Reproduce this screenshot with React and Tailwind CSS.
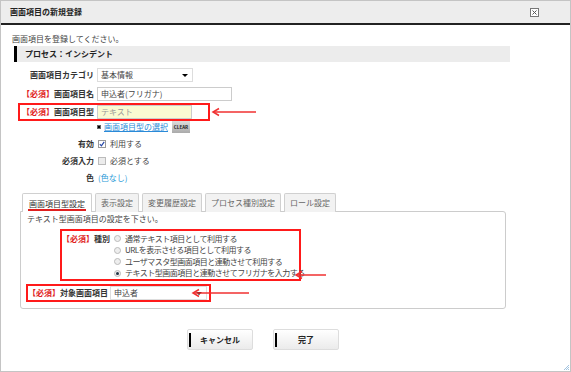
import React from 'react';

const Req = () => <span className="text-[#e02020]">【必須】</span>;

const Arrow = ({ x1, x2, y }) => (
  <svg
    className="absolute pointer-events-none"
    style={{ left: x2 - 2, top: y - 6, width: x1 - x2 + 4, height: 12 }}
    viewBox={`0 0 ${x1 - x2 + 4} 12`}
  >
    <line x1={x1 - x2 + 2} y1="6" x2="3" y2="6" stroke="#f03030" strokeWidth="1.5" />
    <polyline points="9,2.5 3,6 9,9.5" fill="none" stroke="#f03030" strokeWidth="1.5" />
  </svg>
);

const Select = ({ value, w }) => (
  <div className={`${w} shrink-0 h-[14px] border border-[#ddd] bg-white flex items-center justify-between pl-[3px] pr-[4px]`}>
    <span>{value}</span>
    <span className="w-0 h-0 border-l-[3px] border-r-[3px] border-t-[3px] border-l-transparent border-r-transparent border-t-black" />
  </div>
);

const Radio = ({ on }) => (
  <span className="shrink-0 w-[7px] h-[7px] rounded-full border border-[#bbb] bg-[#eee] flex items-center justify-center">
    {on && <span className="w-[3px] h-[3px] rounded-full bg-[#234]" />}
  </span>
);

const Tab = ({ label, active }) => (
  <div
    className={`h-[19px] px-[5px] flex items-center border border-b-0 border-[#d0d0d0] rounded-t-[2px] ${
      active ? 'bg-white text-[#333] z-10' : 'bg-[#f2f2f2] text-[#666]'
    }`}
  >
    <span className={active ? 'border-b-2 border-[#e02020] leading-[11px] mt-[3px] px-[1px]' : ''}>{label}</span>
  </div>
);

const Btn = ({ label }) => (
  <button className="w-[66px] h-[21px] border border-[#ddd] rounded-[2px] bg-gradient-to-b from-white to-[#ebebeb] flex items-center">
    <span className="w-[2px] h-[14px] bg-black ml-[1px]" />
    <span className="flex-1 text-center font-bold text-[#222] pr-[3px]">{label}</span>
  </button>
);

export default function App() {
  const rows = [
    ['通常テキスト項目として利用する', false],
    ['URLを表示させる項目として利用する', false],
    ['ユーザマスタ型画面項目と連動させて利用する', false],
    ['テキスト型画面項目と連動させてフリガナを入力する', true],
  ];
  return (
    <div className="relative w-[571px] h-[372px] bg-white border border-[#c4c4c4] overflow-hidden font-['Noto_Sans_CJK_JP','Liberation_Sans',sans-serif] text-[8px] text-[#444]">
      <div className="h-[24px] bg-[#ededed] border-b-2 border-[#222] flex items-center justify-between pl-[9px] pr-[31px]">
        <span className="font-bold text-[#222]">画面項目の新規登録</span>
        <svg width="9" height="9" viewBox="0 0 9 9">
          <rect x="0.5" y="0.5" width="8" height="8" fill="white" stroke="#777" />
          <path d="M2.5 2.5 L6.5 6.5 M6.5 2.5 L2.5 6.5" stroke="#555" strokeWidth="1" />
        </svg>
      </div>

      <div className="px-[11px]">
        <div className="mt-[8px] leading-[12px]">画面項目を登録してください。</div>
        <div className="mt-[1px] ml-[2px] w-[496px] h-[16px] bg-[#ececec] border-l-[3px] border-black flex items-center pl-[8px] font-bold text-[#222]">
          プロセス：インシデント
        </div>

        <div className="mt-[6px] flex items-center h-[14px] gap-[3px]">
          <div className="w-[82px] text-right font-bold text-[#333]">画面項目カテゴリ</div>
          <Select value="基本情報" w="w-[96px]" />
        </div>
        <div className="mt-[5px] flex items-center h-[14px] gap-[3px]">
          <div className="w-[82px] text-right font-bold text-[#333] whitespace-nowrap"><Req />画面項目名</div>
          <div className="w-[135px] h-[14px] border border-[#ccc] bg-white flex items-center pl-[3px]">申込者(フリガナ)</div>
        </div>
        <div className="mt-[2px] ml-[6px] w-[192px] h-[18px] border-2 border-[#ff1a1a] flex items-center gap-[3px]">
          <div className="w-[74px] text-right font-bold text-[#333] whitespace-nowrap"><Req />画面項目型</div>
          <div className="w-[95px] h-[14px] border border-[#ccc] bg-[#fafad2] flex items-center pl-[3px] text-[#999]">テキスト</div>
        </div>
        <div className="h-[12px] flex items-center pl-[85px] gap-[2px]">
          <span className="w-[4px] h-[4px] bg-black border border-[#666]" />
          <span className="text-[#2a8ad8] underline ml-[1px]">画面項目型の選択</span>
          <span className="ml-[2px] h-[12px] w-[18px] bg-gradient-to-b from-[#ddd] to-[#aaa] flex items-center justify-center text-[4.5px] font-bold text-[#222]">CLEAR</span>
        </div>

        <div className="mt-[4px] flex items-center h-[14px] gap-[4px]">
          <div className="w-[82px] text-right font-bold text-[#333]">有効</div>
          <span className="w-[8px] h-[8px] border border-[#999] bg-white flex items-center justify-center">
            <svg width="6" height="6" viewBox="0 0 6 6"><path d="M0.8 3.2 L2.4 4.8 L5.2 0.8" fill="none" stroke="#2446a8" strokeWidth="1.2" /></svg>
          </span>
          <span>利用する</span>
        </div>
        <div className="mt-[3px] flex items-center h-[14px] gap-[4px]">
          <div className="w-[82px] text-right font-bold text-[#333]">必須入力</div>
          <span className="w-[8px] h-[8px] border border-[#bbb] bg-[#ececec]" />
          <span>必須とする</span>
        </div>
        <div className="mt-[3px] flex items-center h-[14px] gap-[4px]">
          <div className="w-[82px] text-right font-bold text-[#333]">色</div>
          <span className="text-[#2a9ad8]">(色なし)</span>
        </div>

        <div className="mt-[8px] ml-[10px] flex gap-[3px] -mb-px relative z-10">
          <Tab label="画面項目型設定" active />
          <Tab label="表示設定" />
          <Tab label="変更履歴設定" />
          <Tab label="プロセス種別設定" />
          <Tab label="ロール設定" />
        </div>
        <div className="ml-[8px] w-[486px] h-[98px] border border-[#ccc] rounded-b-[3px] rounded-tr-[3px] bg-white">
          <div className="pt-[1px] pl-[6px] leading-[12px]">テキスト型画面項目の設定を下さい。</div>
          <div className="mt-[4px] ml-[39px] w-[241px] h-[52px] border-2 border-[#ff1a1a] flex pt-[2px]">
            <div className="w-[43px] shrink-0 text-right font-bold text-[#333] whitespace-nowrap leading-[11.5px]"><Req />種別</div>
            <div className="ml-[9px] flex flex-col">
              {rows.map(([t, on]) => (
                <div key={t} className="h-[11.5px] flex items-center gap-[4px] whitespace-nowrap">
                  <Radio on={on} />
                  <span className="tracking-[-0.5px]">{t}</span>
                </div>
              ))}
            </div>
          </div>
          <div className="mt-[3px] ml-[5px] w-[185px] h-[18px] border-2 border-[#ff1a1a] flex items-center gap-[2px]">
            <div className="w-[80px] shrink-0 text-right font-bold text-[#333] whitespace-nowrap"><Req />対象画面項目</div>
            <Select value="申込者" w="w-[97px]" />
          </div>
        </div>

        <div className="mt-[20px] ml-[8px] w-[486px] flex justify-center gap-[20px]">
          <Btn label="キャンセル" />
          <Btn label="完了" />
        </div>
      </div>

      <Arrow x1={255} x2={211} y={111} />
      <Arrow x1={325} x2={294} y={274} />
      <Arrow x1={248} x2={191} y={292} />

      <svg className="absolute right-0 bottom-0" width="7" height="7" viewBox="0 0 7 7">
        <path d="M6 1 L1 6 M6 3 L3 6 M6 5 L5 6" stroke="#8ab4d8" strokeWidth="0.8" />
      </svg>
    </div>
  );
}
